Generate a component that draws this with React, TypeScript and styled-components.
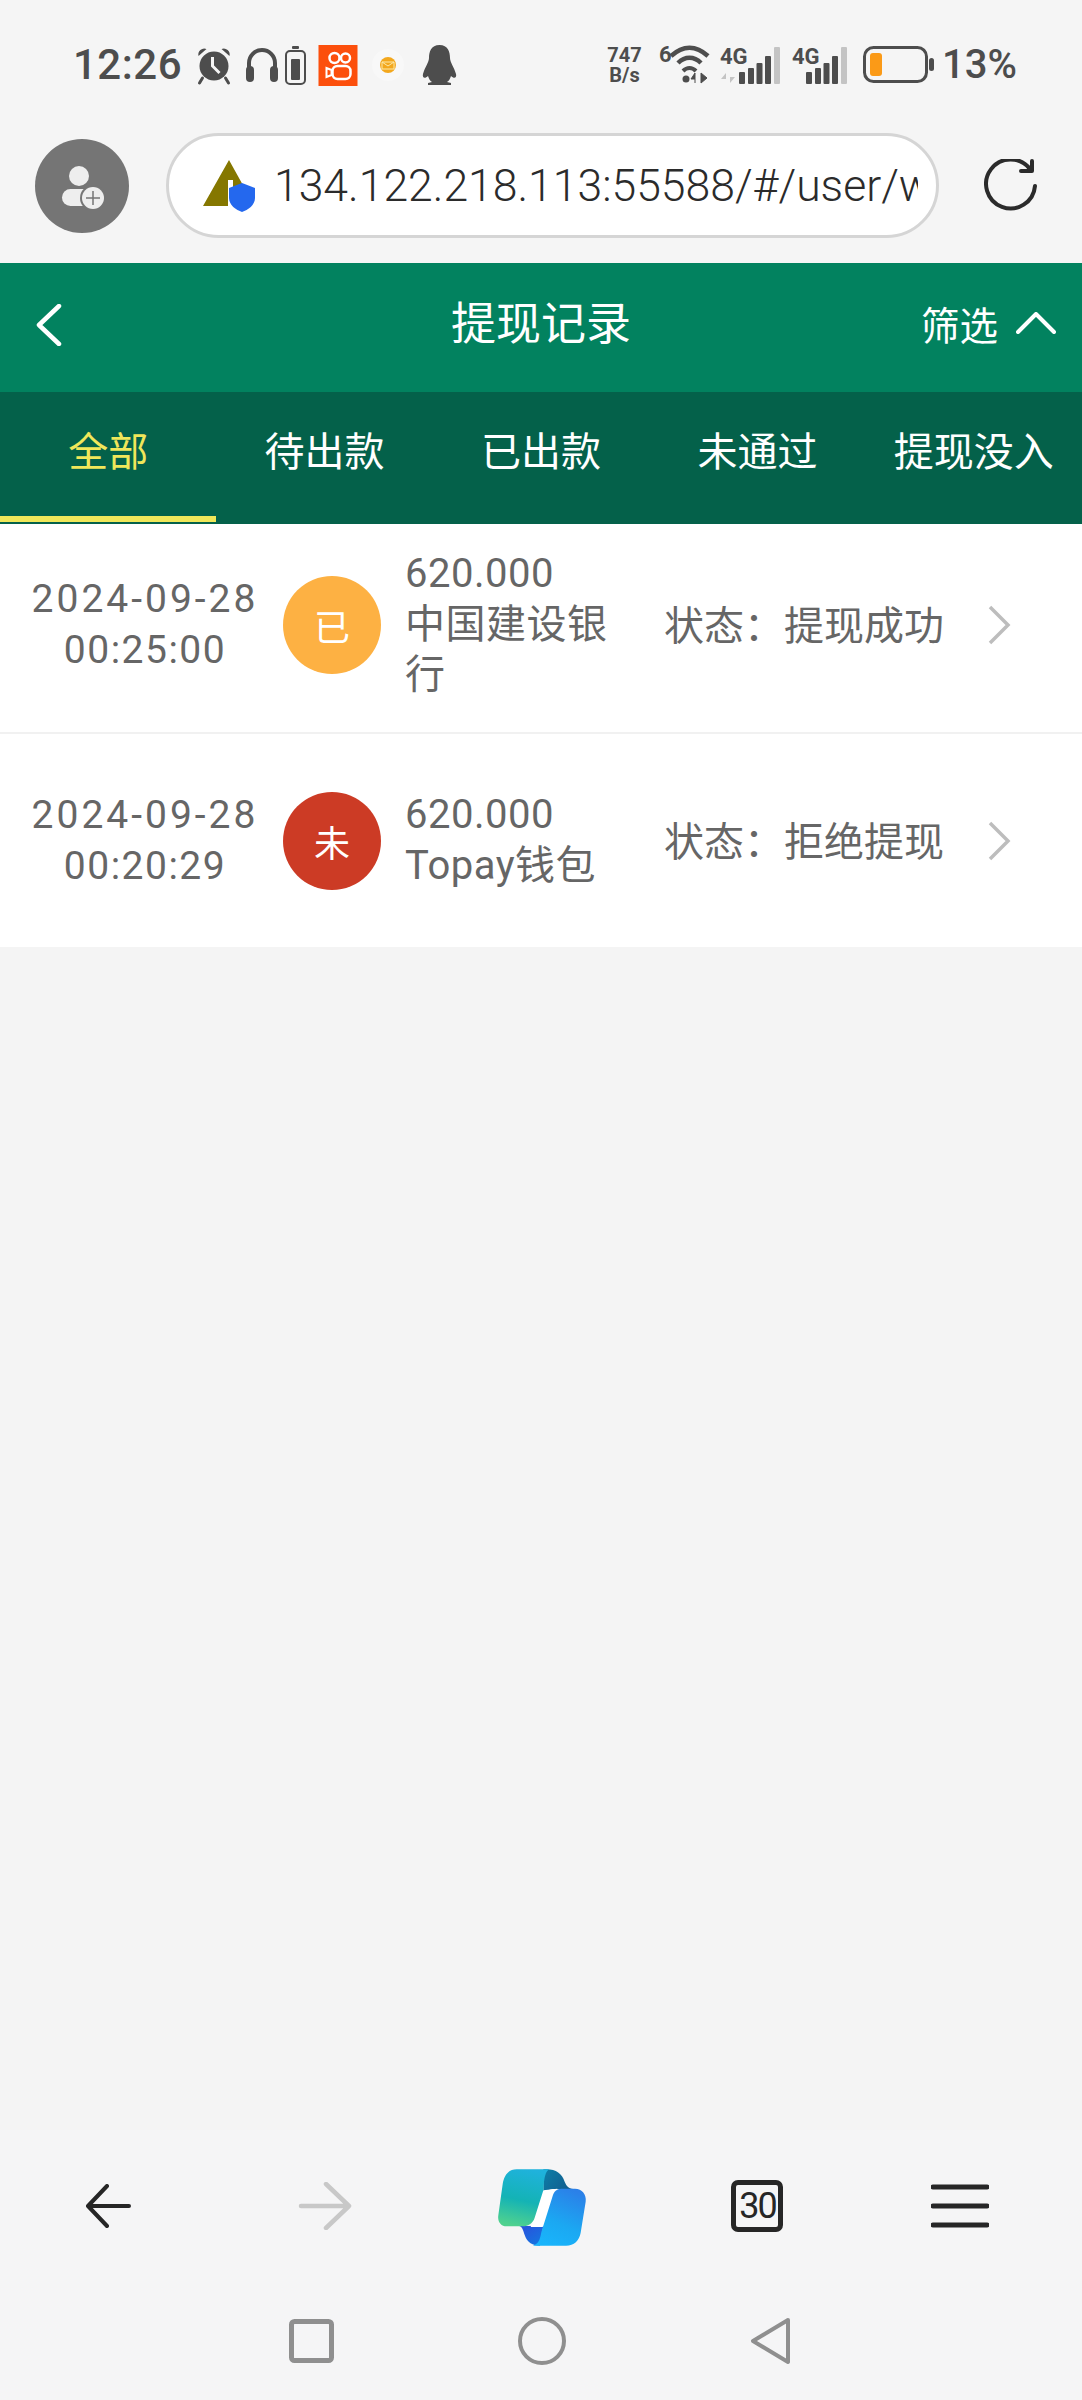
import styled, { createGlobalStyle } from 'styled-components';

const GlobalStyle = createGlobalStyle`
  html, body {
    margin: 0;
    padding: 0;
  }
  body {
    font-family: Roboto, "Noto Sans CJK SC", sans-serif;
  }
  * {
    box-sizing: border-box;
  }
`;

const Page = styled.div`
  width: 1082px;
  height: 2400px;
  display: flex;
  flex-direction: column;
  background: #f4f4f4;
  overflow: hidden;
`;

const StatusBar = styled.div`
  height: 108px;
  padding: 22px 65px 0 73px;
  background: #f5f5f5;
  display: flex;
  align-items: center;
  justify-content: space-between;
  color: #4d4d4d;
`;

const StatusGroup = styled.div`
  display: flex;
  align-items: center;
`;

const Clock = styled.span`
  font-size: 42px;
  font-weight: 500;
  line-height: 40px;
  letter-spacing: 0.5px;
`;

const StatusIcon = styled.svg<{ $ml: number }>`
  display: block;
  flex: none;
  overflow: visible;
  margin-left: ${(p) => p.$ml}px;
`;

const NetSpeed = styled.div`
  width: 41px;
  font-family: Roboto, sans-serif;
  font-size: 20px;
  font-weight: 700;
  line-height: 20px;
  text-align: center;
  white-space: nowrap;
`;

const Percent = styled.span`
  margin-left: 7px;
  font-size: 40px;
  font-weight: 500;
  line-height: 40px;
`;

const BrowserBar = styled.div`
  height: 155px;
  padding: 0 44px 0 35px;
  background: #f5f5f5;
  display: flex;
  align-items: center;
`;

const Avatar = styled.div`
  width: 94px;
  height: 94px;
  flex: none;
  border-radius: 50%;
  background: #757575;
  display: flex;
  align-items: center;
  justify-content: center;
`;

const UrlPill = styled.div`
  width: 773px;
  height: 105px;
  margin-left: 37px;
  padding: 0 18px 0 34px;
  flex: none;
  border: 3px solid #d5d5d5;
  border-radius: 53px;
  background: #fff;
  display: flex;
  align-items: center;
  overflow: hidden;
`;

const ShieldIcon = styled.svg`
  flex: none;
`;

const UrlText = styled.div`
  margin-left: 19px;
  font-size: 44.5px;
  font-weight: 300;
  color: #2b2b2b;
  white-space: nowrap;
  overflow: hidden;
`;

const ReloadButton = styled.div`
  margin-left: auto;
  flex: none;
  display: flex;
`;

const Header = styled.header`
  height: 129px;
  padding: 0 26px 5px;
  background: #02825f;
  color: #fff;
  display: grid;
  grid-template-columns: 1fr auto 1fr;
  align-items: center;
`;

const BackButton = styled.div`
  margin-left: 10px;
  display: flex;
`;

const Title = styled.h1`
  margin: 0;
  font-size: 45px;
  font-weight: 400;
  line-height: 60px;
`;

const FilterButton = styled.div`
  padding-bottom: 4px;
  justify-self: end;
  display: flex;
  align-items: center;
  gap: 18px;
  font-size: 38.5px;
`;

const Tabs = styled.nav`
  height: 132px;
  background: #04614a;
  display: grid;
  grid-template-columns: repeat(5, 1fr);
`;

const Tab = styled.div<{ $active?: boolean }>`
  height: 130px;
  padding-bottom: 10px;
  border-bottom: ${(p) => (p.$active ? '6px solid #f0e75a' : '6px solid transparent')};
  display: flex;
  align-items: center;
  justify-content: center;
  font-size: 40px;
  color: ${(p) => (p.$active ? '#f0e75a' : '#fff')};
  white-space: nowrap;
`;

const List = styled.main`
  background: #fff;
`;

const RecordRow = styled.div<{ $height: number; $lift: number }>`
  height: ${(p) => p.$height}px;
  padding: 0 0 ${(p) => p.$lift}px 20px;
  background: #fff;
  display: flex;
  align-items: center;
  color: #666;
  font-size: 40px;
  & + & {
    border-top: 2px solid #f1f1f1;
  }
`;

const DateCol = styled.div`
  width: 250px;
  flex: none;
  font-size: 39px;
  line-height: 51px;
  text-align: center;
`;

const DateLine = styled.div<{ $spacing: number }>`
  letter-spacing: ${(p) => p.$spacing}px;
`;

const StatusDot = styled.div<{ $color: string }>`
  width: 98px;
  height: 98px;
  margin-left: 13px;
  flex: none;
  border-radius: 50%;
  background: ${(p) => p.$color};
  color: #fff;
  font-size: 36px;
  display: flex;
  align-items: center;
  justify-content: center;
`;

const InfoCol = styled.div`
  width: 230px;
  margin-left: 24px;
  flex: none;
  line-height: 50.5px;
  letter-spacing: 0.5px;
`;

const StatusText = styled.div`
  width: 323px;
  margin-left: 29px;
  padding-bottom: 4px;
  flex: none;
  white-space: nowrap;
`;

const RowChevron = styled.svg`
  flex: none;
`;

const Spacer = styled.div`
  flex: 1;
`;

const BottomBar = styled.footer`
  background: #f5f5f6;
`;

const Toolbar = styled.div`
  height: 152px;
  display: grid;
  grid-template-columns: repeat(5, 1fr);
  align-items: center;
  justify-items: center;
`;

const ToolIcon = styled.svg<{ $mr?: number }>`
  display: block;
  margin-right: ${(p) => p.$mr ?? 0}px;
`;

const CopilotIcon = styled.svg`
  display: block;
  margin-right: 2px;
`;

const TabCount = styled.div`
  width: 52px;
  height: 52px;
  border: 5px solid #262626;
  border-radius: 7px;
  color: #262626;
  font-size: 36px;
  letter-spacing: -2px;
  display: flex;
  align-items: center;
  justify-content: center;
`;

const NavRow = styled.div`
  height: 118px;
  padding-right: 3px;
  display: flex;
  align-items: center;
  justify-content: center;
  gap: 184px;
`;

const tabNames = ['全部', '待出款', '已出款', '未通过', '提现没入'];

const records = [
  { date: '2024-09-28', time: '00:25:00', mark: '已', color: '#fdb143', amount: '620.000', bank: '中国建设银行', status: '状态：提现成功', height: 208, lift: 6 },
  { date: '2024-09-28', time: '00:20:29', mark: '未', color: '#cc3b25', amount: '620.000', bank: 'Topay钱包', status: '状态：拒绝提现', height: 215, lift: 0 },
];

function SignalBars({ x }: { x: number }) {
  return (
    <g fill="#4d4d4d">
      <rect x={x} y="26" width="6" height="12" rx="1" />
      <rect x={x + 9} y="22" width="6" height="16" rx="1" />
      <rect x={x + 17.5} y="17" width="6" height="21" rx="1" />
      <rect x={x + 26} y="10" width="6" height="28" rx="1" />
      <rect x={x + 35} y="1" width="6" height="37" rx="1" fill="#c4c4c4" />
    </g>
  );
}

function Copilot() {
  return (
    <CopilotIcon width="160" height="110" viewBox="0 0 480 330">
      <defs>
        <linearGradient id="copilotLeft" x1="0.6" y1="0" x2="0.4" y2="1">
          <stop offset="0" stopColor="#1fb2dc" />
          <stop offset="0.55" stopColor="#14b3b5" />
          <stop offset="1" stopColor="#4fd18f" />
        </linearGradient>
        <linearGradient id="copilotRight" x1="0.7" y1="0" x2="0.3" y2="1">
          <stop offset="0" stopColor="#2b80e8" />
          <stop offset="0.6" stopColor="#1ba8f2" />
          <stop offset="1" stopColor="#19b4fb" />
        </linearGradient>
        <linearGradient id="copilotTop" x1="0" y1="0" x2="1" y2="0.6">
          <stop offset="0" stopColor="#0d7fa8" />
          <stop offset="1" stopColor="#125a8c" />
        </linearGradient>
        <linearGradient id="copilotBottom" x1="0" y1="0" x2="0.8" y2="1">
          <stop offset="0" stopColor="#2b4fdc" />
          <stop offset="1" stopColor="#1476e0" />
        </linearGradient>
      </defs>
      <path d="M250 55 C285 52 305 65 314 92 C320 108 330 114 345 114 L285 114 C265 114 255 122 250 135 Z" fill="url(#copilotTop)" />
      <path d="M178 225 C188 228 190 240 194 252 C202 275 218 284 240 284 L250 225 Z" fill="url(#copilotBottom)" />
      <path d="M250 118 L292 113 L248 228 L212 228 Z" fill="#fff" />
      <path d="M170 55 L268 55 C258 60 255 74 252 92 L250 118 L224 200 C219 216 206 226 188 226 L140 226 C122 226 112 212 115 193 L128 100 C132 72 146 55 170 55 Z" fill="url(#copilotLeft)" />
      <path d="M304 113 L345 113 C366 113 380 130 377 152 L362 245 C358 268 342 284 318 284 L218 284 C234 280 240 268 244 244 L278 135 C282 122 290 113 304 113 Z" fill="url(#copilotRight)" />
    </CopilotIcon>
  );
}

export default function App() {
  return (
    <Page>
      <GlobalStyle />
      <StatusBar>
        <StatusGroup>
          <Clock>12:26</Clock>
          <StatusIcon $ml={14} width="36" height="38" viewBox="0 0 35 38">
            <circle cx="17.5" cy="20" r="14.5" fill="#4d4d4d" />
            <path d="M2 10 A6 6 0 0 1 10 3 Z M33 10 A6 6 0 0 0 25 3 Z" fill="#4d4d4d" />
            <path d="M6 32 L3 37 M29 32 L32 37" stroke="#4d4d4d" strokeWidth="3" strokeLinecap="round" />
            <path d="M16 11 V20 L23 27" stroke="#f5f5f5" strokeWidth="3" fill="none" />
          </StatusIcon>
          <StatusIcon $ml={14} width="32" height="36" viewBox="0 0 32 36">
            <path d="M3 22 V16 A13 13 0 0 1 29 16 V22" stroke="#4d4d4d" strokeWidth="4" fill="none" />
            <rect x="0" y="19" width="8" height="16" rx="4" fill="#4d4d4d" />
            <rect x="24" y="19" width="8" height="16" rx="4" fill="#4d4d4d" />
          </StatusIcon>
          <StatusIcon $ml={7} width="21" height="39" viewBox="0 0 21 39">
            <rect x="7" y="0" width="7" height="3" rx="1" fill="#4d4d4d" />
            <rect x="1" y="5" width="19" height="33" rx="4" stroke="#4d4d4d" strokeWidth="2" fill="none" />
            <rect x="6" y="13" width="9" height="21" rx="1" fill="#4d4d4d" />
          </StatusIcon>
          <StatusIcon $ml={12} width="40" height="41" viewBox="0 0 39 41">
            <rect width="39" height="41" fill="#fc4f0c" />
            <circle cx="16" cy="13" r="5" stroke="#fff" strokeWidth="2.5" fill="none" />
            <circle cx="27" cy="13" r="4.5" stroke="#fff" strokeWidth="2.5" fill="none" />
            <rect x="14" y="21" width="18" height="13" rx="5" stroke="#fff" strokeWidth="2.5" fill="none" />
            <path d="M13 25 L8 23 V32 L13 30 Z" stroke="#fff" strokeWidth="2" fill="none" />
          </StatusIcon>
          <StatusIcon $ml={14} width="32" height="32" viewBox="0 0 32 32">
            <circle cx="16" cy="16" r="16" fill="#f8f8f8" />
            <circle cx="16" cy="16" r="8" fill="#f3a81e" />
            <path d="M10 13 H22 V20 H10 Z M10 13 L16 17 L22 13" stroke="#fde9a8" strokeWidth="1" fill="none" />
          </StatusIcon>
          <StatusIcon $ml={18} width="35" height="40" viewBox="0 0 35 40">
            <path d="M17.5 0 C26 0 28 7 28 13 C28 17 32 22 34 29 C35 33 32 34 29 31 C28 34 27 36 25 37 L29 38 V40 H6 V38 L10 37 C8 36 7 34 6 31 C3 34 0 33 1 29 C3 22 7 17 7 13 C7 7 9 0 17.5 0 Z" fill="#4d4d4d" />
          </StatusIcon>
        </StatusGroup>
        <StatusGroup>
          <NetSpeed>747<br />B/s</NetSpeed>
          <StatusIcon $ml={14} width="51" height="38" viewBox="0 0 51 38">
            <text x="0" y="16" fontSize="22" fontWeight="700" fill="#4d4d4d" fontFamily="Roboto, sans-serif">6</text>
            <path d="M12 10 C24 -1 37 -1 49 10" stroke="#4d4d4d" strokeWidth="4.5" fill="none" />
            <path d="M19 17 C26 10 35 10 42 17" stroke="#4d4d4d" strokeWidth="4.5" fill="none" />
            <path d="M24 25 C28 21 33 21 37 25" stroke="#4d4d4d" strokeWidth="4" fill="none" />
            <circle cx="27" cy="33" r="3.5" fill="#4d4d4d" />
            <path d="M36 37 V27 L32 33 H36 M42 27 V37 L48 32 L42 27" fill="#4d4d4d" stroke="#4d4d4d" strokeWidth="1" />
          </StatusIcon>
          <StatusIcon $ml={10} width="60" height="38" viewBox="0 0 60 38">
            <text x="0" y="18" fontSize="22" fontWeight="700" fill="#4d4d4d" fontFamily="Roboto, sans-serif">4G</text>
            <path d="M6 37 V27 L1 33 H6 Z M10 27 V37 L15 31 H10 Z" fill="#c4c4c4" />
            <SignalBars x={19} />
          </StatusIcon>
          <StatusIcon $ml={12} width="55" height="38" viewBox="0 0 55 38">
            <text x="0" y="18" fontSize="22" fontWeight="700" fill="#4d4d4d" fontFamily="Roboto, sans-serif">4G</text>
            <SignalBars x={14} />
          </StatusIcon>
          <StatusIcon $ml={16} width="72" height="38" viewBox="0 0 72 38">
            <rect x="1.5" y="1.5" width="62" height="34" rx="9" stroke="#4d4d4d" strokeWidth="3" fill="none" />
            <rect x="7" y="7" width="12" height="23" rx="3" fill="#fb9a17" />
            <rect x="66" y="12" width="5" height="13" rx="2.5" fill="#4d4d4d" />
          </StatusIcon>
          <Percent>13%</Percent>
        </StatusGroup>
      </StatusBar>

      <BrowserBar>
        <Avatar>
          <svg width="48" height="48" viewBox="0 0 48 48">
            <circle cx="21" cy="14" r="10" fill="#eee" />
            <rect x="4" y="27" width="34" height="17" rx="8.5" fill="#eee" />
            <circle cx="35" cy="36" r="13" fill="#757575" />
            <circle cx="35" cy="36" r="11" fill="#eee" />
            <path d="M35 29 V43 M28 36 H42" stroke="#757575" strokeWidth="1.5" />
          </svg>
        </Avatar>
        <UrlPill>
          <ShieldIcon width="52" height="52" viewBox="0 0 52 52">
            <path d="M26 0 L41 27 L30 31 V20 H25 V46 H0 Z" fill="#857700" />
            <path d="M39 23 L52 28 V38 C52 45 45 50 39 52 C33 50 26 45 26 38 V28 Z" fill="#2468ee" />
          </ShieldIcon>
          <UrlText>134.122.218.113:55588/#/user/w</UrlText>
        </UrlPill>
        <ReloadButton>
          <svg width="54" height="54" viewBox="0 0 54 54">
            <path d="M46 10 A24.5 24.5 0 1 0 51 27" stroke="#2b2b2b" strokeWidth="4" fill="none" strokeLinecap="round" />
            <path d="M48 2 V12 H37" stroke="#2b2b2b" strokeWidth="4" fill="none" strokeLinecap="round" strokeLinejoin="round" />
          </svg>
        </ReloadButton>
      </BrowserBar>

      <Header>
        <BackButton>
          <svg width="26" height="42" viewBox="0 0 26 42">
            <path d="M23 2 L3 21 L23 40" stroke="#fff" strokeWidth="4.5" fill="none" strokeLinecap="round" strokeLinejoin="round" />
          </svg>
        </BackButton>
        <Title>提现记录</Title>
        <FilterButton>
          筛选
          <svg width="40" height="22" viewBox="0 0 40 22">
            <path d="M2 20 L20 2 L38 20" stroke="#fff" strokeWidth="4" fill="none" strokeLinecap="round" strokeLinejoin="round" />
          </svg>
        </FilterButton>
      </Header>

      <Tabs>
        {tabNames.map((name, i) => (
          <Tab key={name} $active={i === 0}>{name}</Tab>
        ))}
      </Tabs>

      <List>
        {records.map((r) => (
          <RecordRow key={r.time} $height={r.height} $lift={r.lift}>
            <DateCol>
              <DateLine $spacing={3}>{r.date}</DateLine>
              <DateLine $spacing={1.5}>{r.time}</DateLine>
            </DateCol>
            <StatusDot $color={r.color}>{r.mark}</StatusDot>
            <InfoCol>{r.amount}<br />{r.bank}</InfoCol>
            <StatusText>{r.status}</StatusText>
            <RowChevron width="24" height="40" viewBox="0 0 24 40">
              <path d="M3 2 L21 20 L3 38" stroke="#bdbdbd" strokeWidth="3.5" fill="none" />
            </RowChevron>
          </RecordRow>
        ))}
      </List>

      <Spacer />

      <BottomBar>
        <Toolbar>
          <ToolIcon width="46" height="44" viewBox="0 0 46 44">
            <path d="M22 2 L3 22 L22 42 M4 22 H44" stroke="#262626" strokeWidth="4" fill="none" strokeLinecap="round" strokeLinejoin="round" />
          </ToolIcon>
          <ToolIcon width="54" height="48" viewBox="0 0 54 48">
            <path d="M28 2 L51 24 L28 46 M3 24 H50" stroke="#c8c8c8" strokeWidth="4.5" fill="none" strokeLinecap="round" strokeLinejoin="round" />
          </ToolIcon>
          <Copilot />
          <TabCount>30</TabCount>
          <ToolIcon $mr={28} width="58" height="44" viewBox="0 0 58 44">
            <path d="M2 3 H56 M2 22 H56 M2 41 H56" stroke="#262626" strokeWidth="5" strokeLinecap="round" />
          </ToolIcon>
        </Toolbar>
        <NavRow>
          <ToolIcon width="45" height="44" viewBox="0 0 45 44">
            <rect x="2.5" y="2.5" width="40" height="39" rx="3" stroke="#8f8f8f" strokeWidth="5" fill="none" />
          </ToolIcon>
          <ToolIcon width="48" height="48" viewBox="0 0 48 48">
            <circle cx="24" cy="24" r="22" stroke="#8f8f8f" strokeWidth="4" fill="none" />
          </ToolIcon>
          <ToolIcon width="41" height="48" viewBox="0 0 41 48">
            <path d="M38 3 L3 24 L38 45 Z" stroke="#8f8f8f" strokeWidth="4" fill="none" strokeLinejoin="round" />
          </ToolIcon>
        </NavRow>
      </BottomBar>
    </Page>
  );
}
